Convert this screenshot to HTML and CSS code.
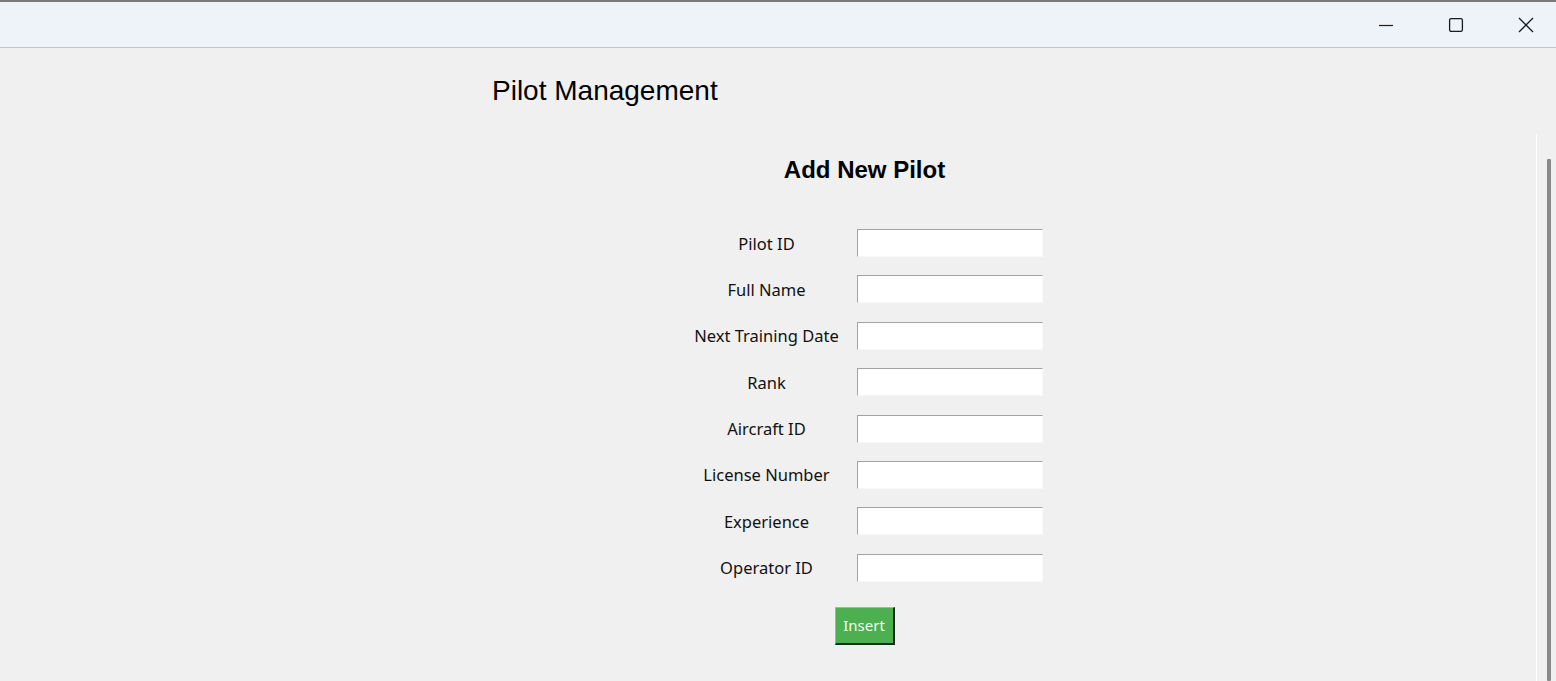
FILE: index.html
```html
<!DOCTYPE html>
<html lang="en">
<head>
<meta charset="utf-8">
<title>Pilot Management</title>
<link rel="stylesheet" href="styles.css">
</head>
<body>
<div class="window">
  <div class="titlebar">
    <div class="caption-btn">
      <svg width="16" height="16" viewBox="0 0 16 16"><path d="M1 8.5h14" stroke="#1b1b1b" stroke-width="1.2" fill="none"/></svg>
    </div>
    <div class="caption-btn">
      <svg width="16" height="16" viewBox="0 0 16 16"><rect x="1.6" y="1.6" width="12.8" height="12.8" rx="1.6" stroke="#1b1b1b" stroke-width="1.3" fill="none"/></svg>
    </div>
    <div class="caption-btn close">
      <svg width="16" height="16" viewBox="0 0 16 16"><path d="M1 1L15 15M15 1L1 15" stroke="#1b1b1b" stroke-width="1.3" fill="none"/></svg>
    </div>
  </div>
  <div class="content">
    <h1 class="page-title">Pilot Management</h1>
    <div class="workspace">
      <div class="canvas">
        <form class="pilot-form">
          <h2 class="form-title">Add New Pilot</h2>
          <div class="fields">
            <label class="field-label">Pilot ID</label><input class="field-input" type="text">
            <label class="field-label">Full Name</label><input class="field-input" type="text">
            <label class="field-label">Next Training Date</label><input class="field-input" type="text">
            <label class="field-label">Rank</label><input class="field-input" type="text">
            <label class="field-label">Aircraft ID</label><input class="field-input" type="text">
            <label class="field-label">License Number</label><input class="field-input" type="text">
            <label class="field-label">Experience</label><input class="field-input" type="text">
            <label class="field-label">Operator ID</label><input class="field-input" type="text">
          </div>
          <button class="insert-btn" type="button">Insert</button>
        </form>
      </div>
      <div class="scrollbar"><div class="thumb"></div></div>
    </div>
  </div>
</div>
</body>
</html>
```

FILE: styles.css
```css
html, body {
  margin: 0;
  padding: 0;
  height: 681px;
  overflow: hidden;
  background: #f0f0f0;
}

.window {
  display: flex;
  flex-direction: column;
  height: 681px;
  font-family: "Noto Sans", "Open Sans", sans-serif;
}

.titlebar {
  display: flex;
  justify-content: flex-end;
  align-items: center;
  height: 45px;
  background: #eef2f9;
  border-top: 2px solid #7a7a7a;
  border-bottom: 1px solid #c6c6c6;
}

.caption-btn {
  width: 70px;
  height: 45px;
  display: flex;
  align-items: center;
  justify-content: center;
}

.caption-btn.close {
  width: 60px;
  padding-left: 5px;
}

.content {
  flex: 1;
  display: flex;
  flex-direction: column;
  min-height: 0;
}

.page-title {
  margin: 27px 0 0 492px;
  font-family: "Liberation Sans", Arial, sans-serif;
  font-weight: normal;
  font-size: 28px;
  line-height: 31px;
  color: #000;
}

.workspace {
  flex: 1;
  display: flex;
  margin-top: 28px;
  min-height: 0;
}

.canvas {
  width: 1537px;
  box-sizing: border-box;
  border-right: 1px solid #ffffff;
}

.scrollbar {
  flex: 1;
  padding-top: 25px;
  padding-left: 10px;
}

.thumb {
  width: 4px;
  height: 100%;
  background: #8a8a8a;
  border-radius: 1px;
}

.pilot-form {
  margin: 22px 0 0 684px;
  width: 361px;
  display: flex;
  flex-direction: column;
  align-items: center;
}

.form-title {
  margin: 0;
  font-family: "Liberation Sans", Arial, sans-serif;
  font-weight: bold;
  font-size: 24px;
  line-height: 27px;
  color: #000;
}

.fields {
  margin-top: 46px;
  display: grid;
  grid-template-columns: 165px 186px;
  column-gap: 8px;
  row-gap: 18.4px;
  align-items: center;
  width: 359px;
  align-self: flex-start;
}

.field-label {
  text-align: center;
  font-size: 16.5px;
  color: #111;
}

.field-input {
  box-sizing: border-box;
  width: 186px;
  height: 28px;
  margin: 0;
  padding: 0 3px;
  background: #fff;
  border-style: solid;
  border-width: 1px;
  border-color: #a3a3a3 #f8f8f8 #f8f8f8 #a3a3a3;
  outline: none;
}

.insert-btn {
  margin-top: 25px;
  width: 60px;
  height: 38px;
  padding: 0;
  background: #4caf50;
  color: #f4fff4;
  font-family: "Noto Sans", "Open Sans", sans-serif;
  font-size: 15px;
  border-style: solid;
  border-width: 1px 2px 2px 1px;
  border-color: #7fcf83 #1f2a1f #1f2a1f #7fcf83;
}
```
